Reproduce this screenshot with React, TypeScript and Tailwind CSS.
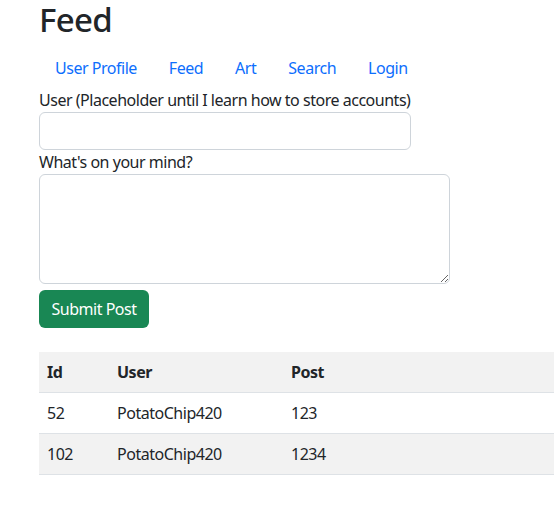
import React from "react";

const rows = [
  { id: "52", user: "PotatoChip420", post: "123" },
  { id: "102", user: "PotatoChip420", post: "1234" },
];

export default function App() {
  return (
    <div
      className="min-h-[516px] bg-white text-[#212529] text-[16px] leading-[24px] tracking-[-0.03em] overflow-hidden"
      style={{ fontFamily: '"Noto Sans", "Open Sans", sans-serif' }}
    >
      <div className="pl-[39px]">
        <h1 className="text-[33px] leading-[40px] font-medium mb-[8px] tracking-[-0.02em]">Feed</h1>
        <nav className="flex h-[40px] items-center">
          {["User Profile", "Feed", "Art", "Search", "Login"].map((l) => (
            <a key={l} className="px-[16px] py-[8px] text-[#0d6efd]" href="#">
              {l}
            </a>
          ))}
        </nav>
        <div className="flex flex-col items-start">
          <label className="block">User (Placeholder until I learn how to store accounts)</label>
          <input
            type="text"
            className="block w-[372px] h-[38px] border border-[#ced4da] rounded-[6px] px-[12px] bg-white outline-none"
          />
          <label className="block">What's on your mind?</label>
          <textarea className="block w-[411px] h-[110px] border border-[#ced4da] rounded-[6px] px-[12px] py-[6px] bg-white outline-none" />
          <button className="mt-[6px] h-[38px] w-[110px] rounded-[6px] bg-[#198754] text-white">
            Submit Post
          </button>
        </div>
        <table className="mt-[24px] w-[600px] table-fixed border-collapse text-left">
          <thead>
            <tr className="bg-[#f2f2f2] border-b border-[#dee2e6]">
              <th className="w-[70px] px-[8px] py-[8px] font-bold">Id</th>
              <th className="w-[174px] px-[8px] py-[8px] font-bold">User</th>
              <th className="px-[8px] py-[8px] font-bold">Post</th>
            </tr>
          </thead>
          <tbody>
            {rows.map((r, i) => (
              <tr
                key={r.id}
                className={`border-b border-[#dee2e6] ${i % 2 === 1 ? "bg-[#f2f2f2]" : "bg-white"}`}
              >
                <td className="px-[8px] py-[8px]">{r.id}</td>
                <td className="px-[8px] py-[8px]">{r.user}</td>
                <td className="px-[8px] py-[8px]">{r.post}</td>
              </tr>
            ))}
          </tbody>
        </table>
      </div>
    </div>
  );
}
